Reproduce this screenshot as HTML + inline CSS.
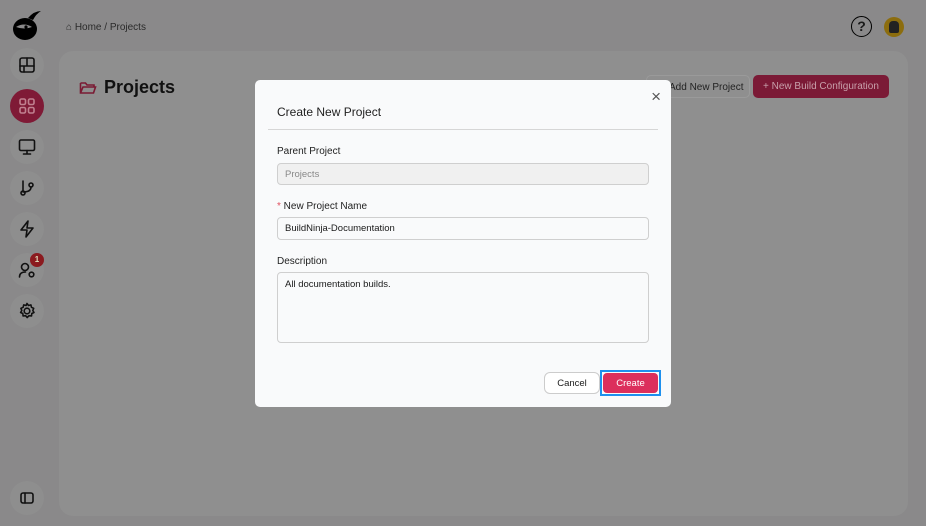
<!DOCTYPE html>
<html><head><meta charset="utf-8"><style>
*{box-sizing:border-box;margin:0;padding:0}
body{width:926px;height:526px;overflow:hidden;background:#8a898a;font-family:"Liberation Sans",sans-serif;position:relative;font-size:11px;color:#1a1a1a}
.panel{position:absolute;left:59px;top:51px;width:849px;height:465px;background:#8f8f8f;border-radius:14px}
.sb{position:absolute;left:10px;width:34px;height:34px;border-radius:50%;background:#8e8e8e;display:flex;align-items:center;justify-content:center}
.sb svg{width:20px;height:20px;fill:none;stroke:#111;stroke-width:1.6;stroke-linecap:round;stroke-linejoin:round}
.modal{position:absolute;left:255px;top:80px;width:416px;height:327px;background:#f9fafb;border-radius:5px}
.lbl{position:absolute;left:22px;font-size:10px;color:#222}
.inp{position:absolute;left:22px;width:372px;border:1px solid #cfcfcf;border-radius:4px;background:#f9fafb;font-size:9.5px;padding-left:7px;display:flex;align-items:center}
</style></head><body>
<svg style="position:absolute;left:10px;top:8px" width="34" height="34" viewBox="0 0 34 34"><ellipse cx="15" cy="21" rx="12" ry="11" fill="#000"/><path d="M18 10 Q24 3 31 3 Q26 6 23 12Z" fill="#000"/><path d="M6 19 Q14 14 22 19 Q14 22 6 19Z" fill="#8a898a"/><circle cx="16" cy="19" r="1.6" fill="#000"/></svg>
<div style="position:absolute;left:66px;top:22px;font-size:10px;color:#2a2a2a">⌂ Home / Projects</div>
<div style="position:absolute;left:851px;top:16px;width:21px;height:21px;border:1.8px solid #000;border-radius:50%;text-align:center;font-size:14px;line-height:18px;font-weight:bold">?</div>
<div style="position:absolute;left:884px;top:17px;width:20px;height:20px;border-radius:50%;background:#8c6d0e"><div style="margin:4px 5px;width:10px;height:12px;background:#222;border-radius:4px 4px 2px 2px"></div></div>

<div class="sb" style="top:48px"><svg viewBox="0 0 20 20"><rect x="3" y="3" width="14" height="14" rx="2"/><path d="M3 11h14M10 11V3M7 11v6"/></svg></div>
<div class="sb" style="top:89px;background:#7f1a36"><svg viewBox="0 0 20 20" style="stroke:#c0808f"><rect x="3" y="3" width="5.5" height="5.5" rx="1.5"/><rect x="11.5" y="3" width="5.5" height="5.5" rx="1.5"/><rect x="3" y="11.5" width="5.5" height="5.5" rx="1.5"/><rect x="11.5" y="11.5" width="5.5" height="5.5" rx="1.5"/></svg></div>
<div class="sb" style="top:130px"><svg viewBox="0 0 20 20"><rect x="2.5" y="3" width="15" height="10.5" rx="1.5"/><path d="M10 13.5v3M6.5 17h7"/></svg></div>
<div class="sb" style="top:171px"><svg viewBox="0 0 20 20"><circle cx="6" cy="15" r="2"/><circle cx="14" cy="7" r="2"/><path d="M6 3v10M14 9q0 5-8 5"/></svg></div>
<div class="sb" style="top:212px"><svg viewBox="0 0 20 20"><path d="M11 2L4 11h6l-1 7 7-9h-6z"/></svg></div>
<div class="sb" style="top:253px"><svg viewBox="0 0 20 20"><circle cx="8" cy="7" r="3.5"/><path d="M2.5 17q0-5 6-5"/><circle cx="14.5" cy="14.5" r="2.3"/></svg></div>
<div style="position:absolute;left:30px;top:253px;width:14px;height:14px;border-radius:50%;background:#8b1a1f;color:#ddb;font-size:8px;text-align:center;line-height:14px;font-weight:bold">1</div>
<div class="sb" style="top:294px"><svg viewBox="0 0 20 20"><circle cx="10" cy="10" r="2.8"/><path d="M10 2.5l1.5 2 2.4-.6.6 2.4 2.2 1-.9 2.2 1.2 2-2.2 1-.3 2.5-2.5-.3-1.8 1.8-1.6-1.8-2.5.3-.3-2.5-2.2-1 1.2-2-.9-2.2 2.2-1 .6-2.4 2.4.6z"/></svg></div>
<div class="sb" style="top:481px"><svg viewBox="0 0 20 20"><rect x="4" y="5" width="12" height="10" rx="2"/><path d="M8 5v10"/></svg></div>

<div class="panel"></div>
<svg style="position:absolute;left:79px;top:80px" width="18" height="16" viewBox="0 0 18 16" fill="none" stroke="#7a1a33" stroke-width="1.6"><path d="M1.5 3h5l1.5 2h7v2M1.5 3v10h13l2-6H4l-2.5 6"/></svg>
<div style="position:absolute;left:104px;top:77px;font-size:18px;font-weight:bold;color:#111">Projects</div>
<div style="position:absolute;left:646px;top:75px;width:104px;height:23px;border:1px solid #9a9a9a;border-radius:5px;font-size:10px;padding:6px 0 0 22px;color:#222">Add New Project</div>
<div style="position:absolute;left:753px;top:75px;width:136px;height:23px;background:#7b1a36;border-radius:5px;font-size:10px;padding:6px 0 0 10px;color:#c8a0ab">+ New Build Configuration</div>

<div class="modal">
<div style="position:absolute;left:22px;top:25px;font-size:12px;color:#222">Create New Project</div>
<div style="position:absolute;right:10px;top:7px;font-size:17px;color:#555">×</div>
<div style="position:absolute;left:13px;top:49px;width:390px;height:1px;background:#d6d6d6"></div>
<div class="lbl" style="top:66px">Parent Project</div>
<div class="inp" style="top:83px;height:22px;background:#f0f0f0;color:#888">Projects</div>
<div class="lbl" style="top:121px"><span style="color:#e05060">*</span> New Project Name</div>
<div class="inp" style="top:137px;height:23px">BuildNinja-Documentation</div>
<div class="lbl" style="top:176px">Description</div>
<div class="inp" style="top:192px;height:71px;align-items:flex-start;padding-top:6px">All documentation builds.</div>
<div style="position:absolute;left:289px;top:292px;width:56px;height:22px;border:1px solid #ccc;border-radius:6px;background:#fff;font-size:9.5px;text-align:center;line-height:21px">Cancel</div>
<div style="position:absolute;left:345px;top:290px;width:61px;height:26px;border:2px solid #1e90ee;padding:1px"><div style="width:100%;height:100%;background:#dc2f5c;border-radius:4px;color:#fff;font-size:9.5px;text-align:center;line-height:21px">Create</div></div>
</div>
</body></html>
